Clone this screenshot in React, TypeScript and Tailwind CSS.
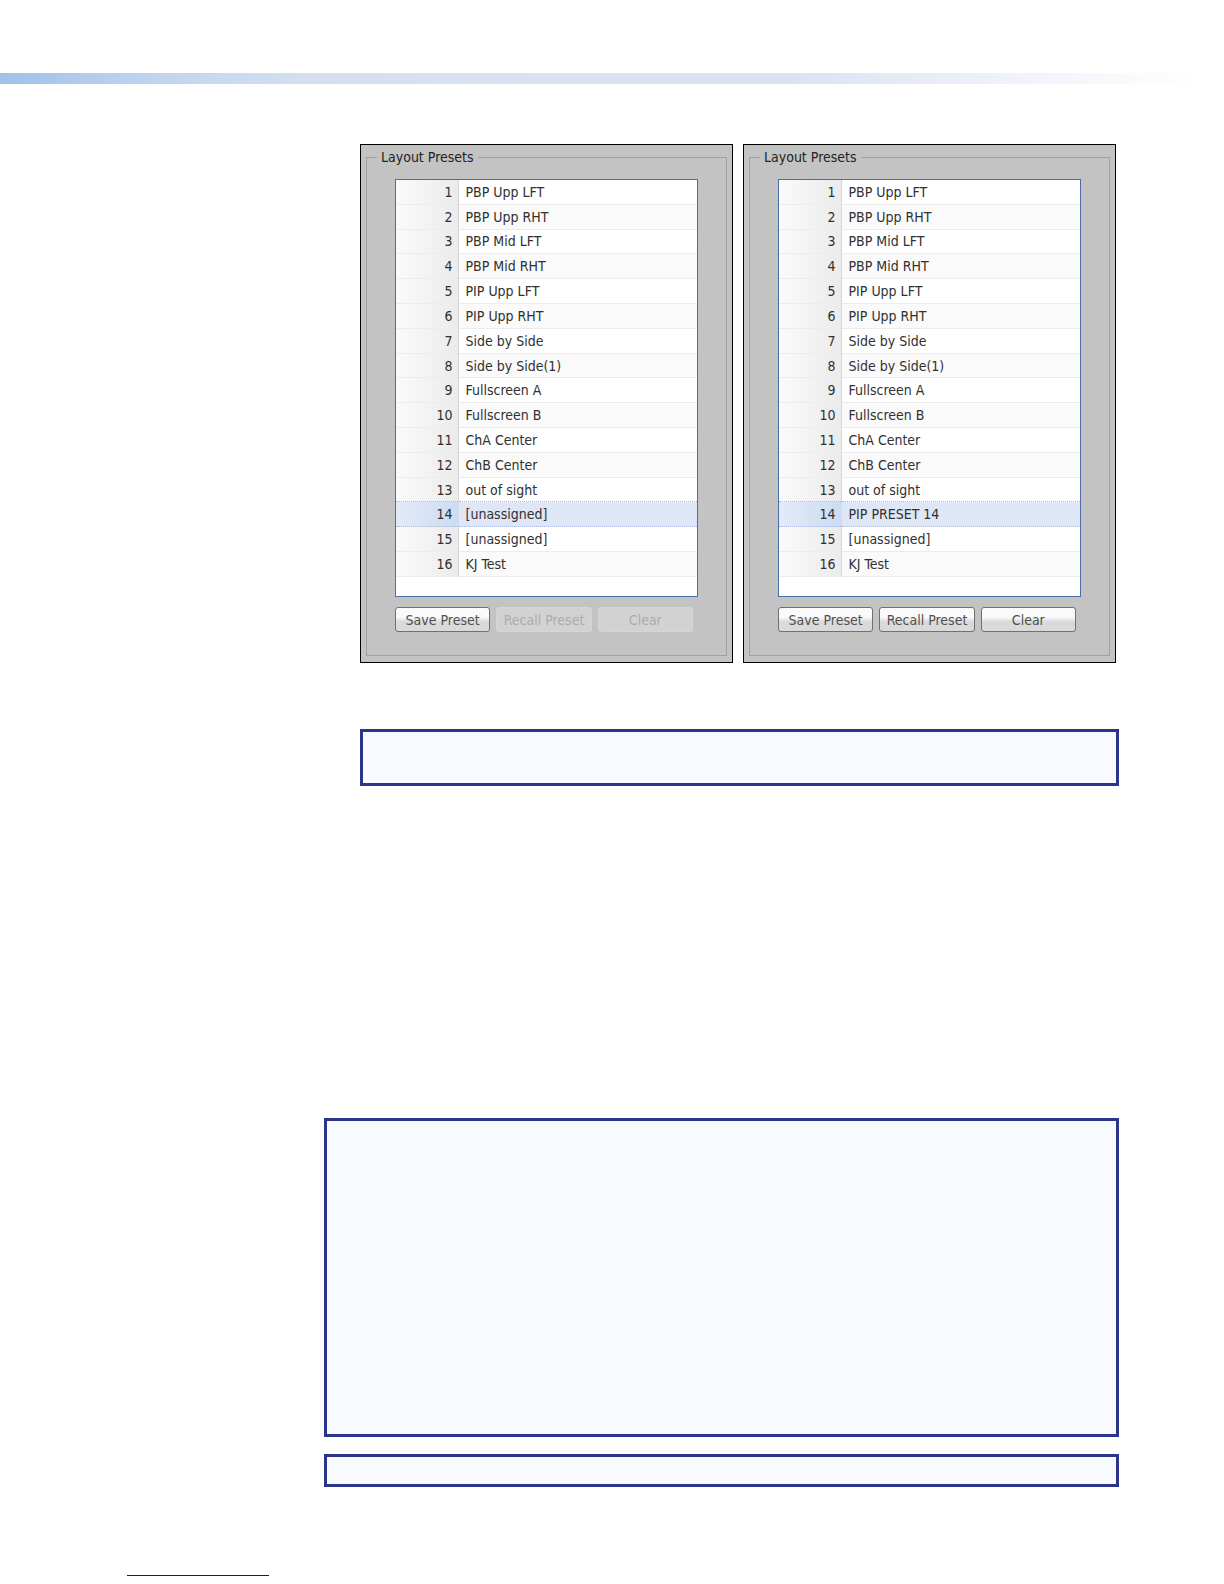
import { useState } from "react";
import { clsx } from "clsx";

const NAMES = [
  "PBP Upp LFT", "PBP Upp RHT", "PBP Mid LFT", "PBP Mid RHT",
  "PIP Upp LFT", "PIP Upp RHT", "Side by Side", "Side by Side(1)",
  "Fullscreen A", "Fullscreen B", "ChA Center", "ChB Center",
  "out of sight", "[unassigned]", "[unassigned]", "KJ Test",
];

const SAVED = NAMES.map((n, i) => (i === 13 ? "PIP PRESET 14" : n));

function PanelButton({ label, disabled }: { label: string; disabled?: boolean }) {
  return (
    <button
      type="button"
      disabled={disabled}
      className={clsx(
        "h-[25px] flex-1 rounded-[3px] border text-center whitespace-nowrap",
        disabled
          ? "border-[#d6d6d6] bg-[#d2d2d2] text-[#acacac]"
          : "border-[#707070] bg-linear-to-b from-[#fafafa] from-40% to-[#dadada] to-60% text-[#505050]"
      )}
    >
      {label}
    </button>
  );
}

function PresetPanel({ names }: { names: string[] }) {
  const [selected, setSelected] = useState(13);
  const empty = names[selected] === "[unassigned]";

  return (
    <section className="min-w-0 flex-1 border border-black bg-[#c3c3c3] px-[5px] pt-[2px] pb-[6px]">
      <fieldset className="min-w-0 border border-[#a0a0a0] px-7 pb-[23px]">
        <legend className="-ml-[18px] px-1 leading-5 text-[#222]">Layout Presets</legend>

        <div className="mt-3 h-[418px] border border-[#4a70ab] bg-white">
          <table className="h-[397px] w-full border-collapse text-[#303030]">
            <tbody>
              {names.map((name, i) => (
                <tr
                  key={i}
                  onClick={() => setSelected(i)}
                  className={clsx(
                    "border-b",
                    // the dotted line above the selection belongs to the row before it
                    i === selected || i === selected - 1
                      ? "border-dotted border-[#a9b8dc]"
                      : "border-[#ececec]",
                    i === selected ? "bg-[#dfe6f5]" : "even:bg-[#fafafa]"
                  )}
                >
                  <th
                    scope="row"
                    className={clsx(
                      "w-[62px] border-r bg-linear-to-r p-0 pr-[5px] text-right font-normal",
                      i === selected
                        ? "border-[#d3dbec] from-[#e3eaf7] to-[#cbdcf2]"
                        : "border-[#d6d6d6] from-[#fafafa] to-[#ebebeb]"
                    )}
                  >
                    {i + 1}
                  </th>
                  <td className="p-0 pl-[7px]">{name}</td>
                </tr>
              ))}
            </tbody>
          </table>
        </div>

        <div className="mt-[10px] mr-[5px] flex gap-[6px]">
          <PanelButton label="Save Preset" />
          <PanelButton label="Recall Preset" disabled={empty} />
          <PanelButton label="Clear" disabled={empty} />
        </div>
      </fieldset>
    </section>
  );
}

function NoteBox({ className }: { className: string }) {
  return <div className={clsx("border-3 border-[#2b3589] bg-[#f7fbff]", className)} />;
}

export default function App() {
  return (
    <div className="bg-white pt-[73px] pb-2 font-['DejaVu_Sans_Condensed','DejaVu_Sans',sans-serif] text-[14px] leading-5">
      <header className="mr-6 h-[11px] bg-[linear-gradient(to_right,#9fc1e9,#bfd3ef_12%,#d3dff0_25%,#dae1f1_45%,#dae1f1_65%,#f0f3fb_85%,#ffffff)]" />

      <main className="mt-[60px] mr-[105px] ml-[324px]">
        <div className="mr-[3px] ml-9 flex gap-[10px]">
          <PresetPanel names={NAMES} />
          <PresetPanel names={SAVED} />
        </div>
        <NoteBox className="mt-[66px] ml-9 h-[57px]" />
        <NoteBox className="mt-[332px] h-[319px]" />
        <NoteBox className="mt-[17px] h-[33px]" />
      </main>

      <footer className="mt-[88px] ml-[127px]">
        <div className="h-px w-[142px] bg-[#12127c]" />
      </footer>
    </div>
  );
}
